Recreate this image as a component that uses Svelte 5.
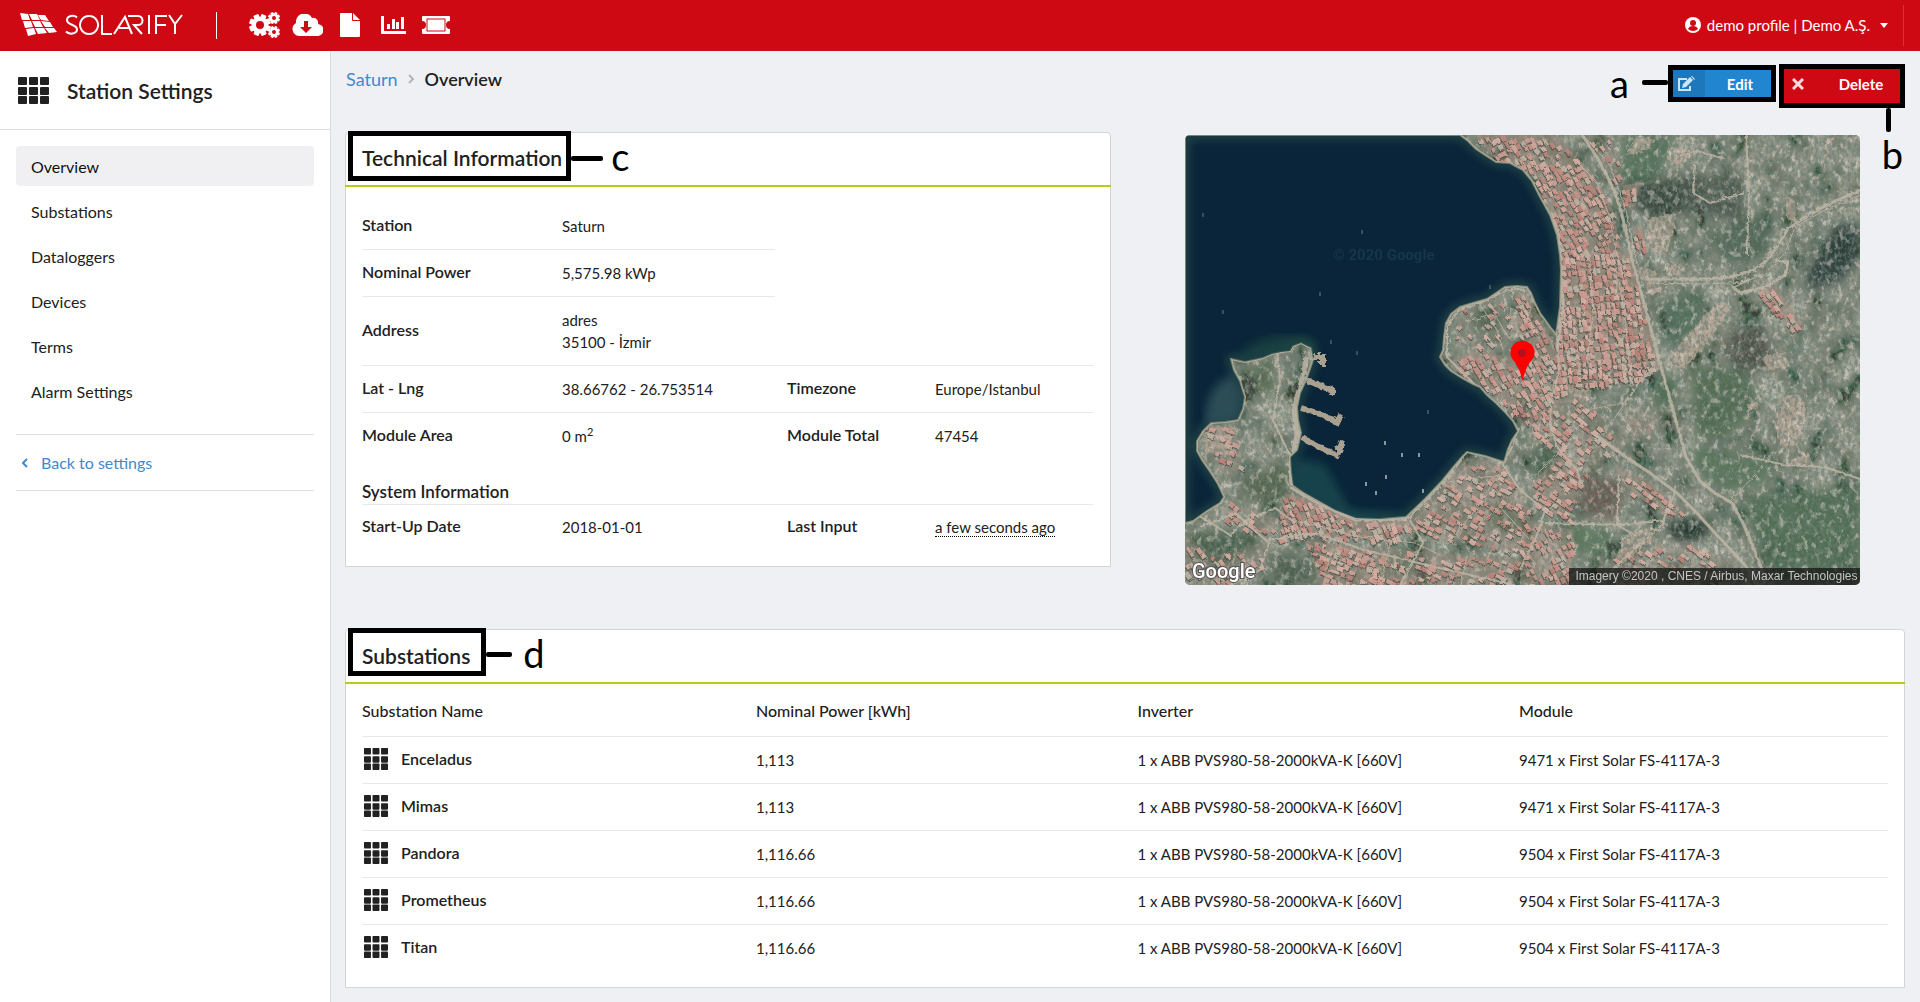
<script>
  const nav = ['Overview', 'Substations', 'Dataloggers', 'Devices', 'Terms', 'Alarm Settings'];

  const substations = [
    ['Enceladus', '1,113', '9471'],
    ['Mimas', '1,113', '9471'],
    ['Pandora', '1,116.66', '9504'],
    ['Prometheus', '1,116.66', '9504'],
    ['Titan', '1,116.66', '9504']
  ];

  // Small deterministic generator, so the town looks the same on every load.
  function generator(seed) {
    let s = seed;
    return () => {
      s = (s * 16807) % 2147483647;
      return s / 2147483647;
    };
  }

  function inside(x, y, poly) {
    let hit = false;
    for (let i = 0, j = poly.length - 1; i < poly.length; j = i++) {
      const [xi, yi] = poly[i];
      const [xj, yj] = poly[j];
      if (yi > y !== yj > y && x < ((xj - xi) * (y - yi)) / (yj - yi) + xi) hit = !hit;
    }
    return hit;
  }

  // Districts: outline, street angle in degrees, share of built-up plots.
  const districts = [
    { poly: [[290, 0], [372, 0], [408, 40], [428, 75], [438, 125], [372, 125], [366, 75], [345, 34], [311, 25]], angle: 62, fill: 0.8 },
    { poly: [[400, 0], [425, 0], [440, 35], [428, 45]], angle: 60, fill: 0.4 },
    { poly: [[378, 118], [446, 118], [474, 232], [450, 246], [371, 258], [374, 200]], angle: 84, fill: 0.92 },
    { poly: [[330, 158], [343, 160], [372, 215], [374, 285], [338, 292], [300, 250], [262, 228], [290, 215], [340, 225]], angle: 62, fill: 0.72 },
    { poly: [[272, 175], [320, 158], [330, 215], [270, 225]], angle: 45, fill: 0.2 },
    { poly: [[374, 260], [400, 262], [440, 312], [400, 340], [350, 300]], angle: 40, fill: 0.35 },
    { poly: [[282, 322], [320, 330], [345, 375], [340, 420], [215, 392], [260, 350]], angle: 30, fill: 0.55 },
    { poly: [[350, 345], [380, 315], [395, 345], [385, 385], [350, 370]], angle: 35, fill: 0.7 },
    { poly: [[100, 358], [130, 366], [172, 386], [225, 386], [210, 408], [160, 402], [95, 402]], angle: 68, fill: 0.85 },
    { poly: [[45, 366], [95, 385], [85, 400], [40, 385]], angle: 40, fill: 0.5 },
    { poly: [[120, 405], [180, 412], [200, 450], [135, 450]], angle: 20, fill: 0.75 },
    { poly: [[180, 412], [340, 425], [330, 450], [180, 450]], angle: 24, fill: 0.55 },
    { poly: [[340, 385], [390, 395], [385, 450], [335, 450]], angle: 65, fill: 0.65 },
    { poly: [[430, 330], [470, 350], [500, 375], [485, 385], [440, 352]], angle: 38, fill: 0.6 },
    { poly: [[425, 420], [500, 405], [545, 425], [550, 450], [430, 450]], angle: 38, fill: 0.3 },
    { poly: [[0, 400], [30, 420], [88, 405], [80, 430], [40, 450], [0, 450]], angle: 55, fill: 0.4 },
    { poly: [[575, 155], [590, 150], [618, 190], [608, 198]], angle: 55, fill: 0.9 },
    { poly: [[447, 95], [458, 92], [462, 116], [452, 120]], angle: 75, fill: 0.9 },
    { poly: [[438, 50], [455, 48], [450, 72], [438, 72]], angle: 80, fill: 0.9 },
    { poly: [[15, 290], [50, 292], [58, 330], [45, 345], [20, 320]], angle: 20, fill: 0.4 }
  ];

  const roofs = ['#dca297', '#d2978c', '#e0b0a4', '#c98a80', '#d8a79c', '#c9bbab', '#e3b9ae'];

  const houses = districts.flatMap((d, k) => {
    const next = generator(977 + k * 131);
    const xs = d.poly.map((p) => p[0]);
    const ys = d.poly.map((p) => p[1]);
    const cx = (Math.min(...xs) + Math.max(...xs)) / 2;
    const cy = (Math.min(...ys) + Math.max(...ys)) / 2;
    const rad = (d.angle * Math.PI) / 180;
    const out = [];
    for (let i = -20; i <= 20; i++) {
      for (let j = -24; j <= 24; j++) {
        const u = i * 7 + next() * 2;
        const v = j * 5 + (j % 3 === 0 ? 1 : 0) + next();
        const x = cx + u * Math.cos(rad) - v * Math.sin(rad);
        const y = cy + u * Math.sin(rad) + v * Math.cos(rad);
        const keep = next() < d.fill;
        const w = 4 + next() * 3;
        const h = 3 + next() * 2;
        const c = roofs[Math.floor(next() * roofs.length)];
        if (keep && inside(x, y, d.poly)) {
          out.push({ x: x.toFixed(1), y: y.toFixed(1), w: w.toFixed(1), h: h.toFixed(1), c, a: d.angle });
        }
      }
    }
    return out;
  });

  const sea =
    'M0 0H275L283 6 291 14 300 20 311 27 325 28 338 35 347 46 354 60 365 80 372 100 375 120 376 135 375 172 371 199 366 193 361 186 355 178 350 168 346 158 342 152 332 151 320 152 311 158 302 164 288 168 275 172 266 179 261 188 259 202 258 215 255 222 260 230 266 236 277 243 288 249 295 252 302 260 311 268 320 277 328 286 333 296 327 305 323 314 319 327 300 321 282 317 277 322 266 335 257 346 240 364 221 382 195 384 171 383 150 375 134 366 118 357 108 350 106 336 105 322 112 315 116 298 113 285 112 272 115 258 121 245 128 225 126 213 116 208 108 211 105 216 96 217 87 219 78 223 60 227 46 224 49 235 55 246 58 256 60 262 58 274 53 285 40 287 26 288 18 296 12 306 12 316 17 325 26 338 33 349 39 362 35 368 22 376 8 386 0 388Z';

  const roads = [
    ['M397 0 412 22 424 45 431 60 438 84 449 132 461 175 476 232 488 275 501 322 515 346 530 358 547 368 558 388 565 405 576 432 580 450', 3],
    ['M461 144 519 144 545 142 569 135 580 127 592 112 602 95 620 82 642 70 675 55', 3],
    ['M461 148 519 149 560 147 580 138 600 118 610 92 640 75 675 60', 1],
    ['M411 300 438 320 465 338 492 358 510 376 529 397 560 430 572 450', 3],
    ['M372 200 374 235 366 270 365 290 372 312 392 335 396 350', 2],
    ['M390 25 410 45 424 80 432 120 440 150', 1],
    ['M398 0 425 30 441 75 452 130', 1],
    ['M376 130 378 172 372 215', 3],
    ['M366 76 374 102 377 135', 2],
    ['M405 130 408 180 400 240M428 120 440 180 445 240', 1],
    ['M334 293 327 312 318 330 335 355 360 375 352 400 335 435', 2],
    ['M278 322 258 347 222 384 170 385 132 368 105 352', 3],
    ['M107 350 106 330 112 300 109 275 118 240 122 222', 5],
    ['M92 215 95 245 88 285 95 300 110 330', 2],
    ['M0 372 45 400 62 385 90 373 110 388', 2],
    ['M15 392 50 378 84 408 75 435 45 450', 2],
    ['M84 405 130 398 180 415 250 432 330 450', 2],
    ['M110 385 165 400 230 408 255 420', 1],
    ['M225 385 238 408 215 450', 2],
    ['M282 420 276 450M205 410 195 450M150 402 138 450', 1],
    ['M345 405 315 372 290 392M320 330 290 375 262 410', 1],
    ['M322 372 345 345 372 320 385 308', 1],
    ['M255 348 300 342 325 340', 1],
    ['M360 388 440 390 480 385', 2],
    ['M434 340 432 390 450 400M490 358 475 392 430 432 415 450', 2],
    ['M440 270 455 245 470 235', 2],
    ['M418 300 440 268 400 275', 1],
    ['M561 0 564 60 562 120M510 30 508 58 525 68 560 58', 2],
    ['M555 320 600 330 640 332 675 344', 2],
    ['M603 125 600 140 580 152 555 158 548 152 565 144', 3],
    ['M590 125 603 128 600 142', 2],
    ['M545 366 575 335 580 320', 1],
    ['M340 156 330 153 315 158 295 168 275 174 262 190 262 222 290 250 322 280', 2],
    ['M292 165 312 195 318 215M280 186 310 180 325 205', 1],
    ['M500 20 512 16 540 24', 2]
  ];

  // Bare ground: light, sandy clearings.
  const clearings = [
    'M465 84 492 78 488 100 478 122 462 110Z',
    'M485 12 508 14 500 28 490 30 482 24Z',
    'M482 128 500 132 496 140 480 140Z',
    'M520 180 540 165 545 175 520 212 500 232 482 230 490 215Z',
    'M598 262 615 258 622 275 612 310 596 312 590 290Z',
    'M565 262 575 270 560 282Z',
    'M575 222 600 216 605 232 585 235Z',
    'M600 60 610 66 612 88 602 84Z',
    'M440 20 452 0 470 4 458 18Z',
    'M606 322 624 318 628 332 606 330Z',
    'M440 400 466 390 470 408 455 412 440 430 430 425Z',
    'M380 252 404 250 408 268 388 262Z',
    'M325 175 345 172 342 200 325 205Z',
    'M640 5 650 0 640 30Z',
    'M450 130 470 135 478 155 465 160Z',
    'M345 290 372 285 368 305 350 310Z',
    'M20 292 50 290 45 320 20 318Z'
  ];

  const fields = [
    ['M438 0H490L480 30 470 45H432Z', '#53715a'],
    ['M450 48 510 42 500 78 462 84 448 72Z', '#37453c'],
    ['M500 40 560 40 560 90 500 72Z', '#4c584e'],
    ['M565 80 590 80 580 120 540 130 520 100Z', '#4f6553'],
    ['M620 140 650 90 675 85 675 120 655 150 620 155Z', '#2f3d3a'],
    ['M470 245 495 240 490 270 470 272Z', '#486a50'],
    ['M505 230 560 235 575 270 540 305 510 300Z', '#50694f'],
    ['M505 310 590 325 580 350 540 358 515 340Z', '#56735a'],
    ['M560 360 675 352V450H590L565 390Z', '#4e6b52'],
    ['M485 385 520 385 522 402 500 408 482 402Z', '#24352f'],
    ['M352 310 378 318 362 345 345 340Z', '#46604a'],
    ['M380 390 430 395 415 420 375 412Z', '#5a7859'],
    ['M0 398 55 395 80 408 40 432 10 430Z', '#48604a'],
    ['M85 415 125 425 135 450 88 450Z', '#4e5e4d'],
    ['M300 372 345 380 330 400 300 392Z', '#4e6c50'],
    ['M210 415 235 420 225 442 198 436Z', '#4a6a50'],
    ['M395 340 440 345 432 385 395 380Z', '#695a4f'],
    ['M440 282 470 280 470 300 442 302Z', '#9a8c7e'],
    ['M285 180 312 172 315 195 290 198Z', '#425c48'],
    ['M60 232 90 222 90 262 70 250Z', '#5c7055'],
    ['M55 340 105 330 105 365 60 368Z', '#55654e'],
    ['M480 165 520 155 515 195 480 215Z', '#4c6b54'],
    ['M540 200 580 190 590 235 550 235Z', '#4d4f47'],
    ['M400 85 428 90 435 115 410 118Z', '#52685a']
  ];

  const boats = [[176, 95], [134, 157], [171, 216], [242, 275], [199, 306], [216, 318], [233, 318], [180, 347], [190, 356], [200, 340], [237, 354], [37, 175], [17, 78], [145, 205], [304, 150]];
</script>

{#snippet grid()}
  <svg class="grid-icon" viewBox="0 0 31 27" preserveAspectRatio="none" aria-hidden="true">
    {#each [0, 11, 22] as x}
      {#each [0, 10, 19] as y}
        <rect {x} {y} width="9" height="8" rx="1" />
      {/each}
    {/each}
  </svg>
{/snippet}

{#snippet cog(x, y, r, n, hole)}
  <g transform="translate({x} {y})">
    {#each Array(n) as _, i}
      <rect x={-r * 0.25} y={-r} width={r * 0.5} height={r} rx={r * 0.1} transform="rotate({(i * 360) / n + 22})" />
    {/each}
    <circle r={r * 0.76} />
    <circle r={hole} class="hole" />
  </g>
{/snippet}

<div class="app">
  <header class="topbar">
    <a class="brand" href="#home" aria-label="Solarify">
      <svg class="panel-logo" viewBox="0 0 38 26" aria-hidden="true">
        <path d="M0 1 8 2 10 8 2 8ZM9 2 17 2 20 8 12 8ZM18 3 25 3 29 9 21 8ZM3 9 11 9 13 15 5 16ZM12 9 20 9 23 15 15 15ZM21 9 30 10 33 15 25 15ZM6 17 14 16 16 22 8 24ZM15 16 24 16 27 21 18 22ZM25 16 34 16 37 20 29 21Z" />
      </svg>
      <svg class="wordmark" viewBox="0 0 118 22" aria-hidden="true">
        <path d="M12 3.500C9 .500 2 1.500 2 6c0 5.500 10 4 10 9.500C12 20 4 21 1 17.500M24 2a9 9 0 1 0 .1 0M37 1V20H47M49 20 60 3 67 20M54 14H64M63 2H73C79 2 79 11 73 11H69L77 20M84 1V20M91 20V2H102M91 11H101M104 1 110 10 117 1M110 10V20" />
      </svg>
    </a>
    <nav class="tools" aria-label="Sections">
      <a href="#settings" aria-label="Settings">
        <svg width="31" height="26" viewBox="0 0 31 26">
          {@render cog(11, 13, 11, 8, 4)}
          {@render cog(25, 6, 6, 8, 2)}
          {@render cog(25, 20, 6, 8, 2)}
        </svg>
      </a>
      <a href="#download" aria-label="Downloads">
        <svg width="31" height="22" viewBox="0 0 31 22">
          <path d="M7 22a7 7 0 0 1-3-13A8.500 8.500 0 0 1 20 4a5 5 0 0 1 6 6 6 6 0 0 1-1 12Z" />
          <path class="hole" d="M12 7h4v6h4l-6 6-6-6h4Z" />
        </svg>
      </a>
      <a href="#reports" aria-label="Reports">
        <svg width="20" height="24" viewBox="0 0 20 24">
          <path d="M0 1Q0 0 1 0H12V7Q12 8 13 8H20V23Q20 24 19 24H1Q0 24 0 23ZM13 0 20 7H13Z" />
        </svg>
      </a>
      <a href="#charts" aria-label="Charts">
        <svg width="25" height="18" viewBox="0 0 25 18">
          <path d="M0 0H3V15H25V18H1Q0 18 0 17ZM6 8H9V13H6ZM11 3H14V13H11ZM15 6H18V13H15ZM20 1H23V13H20Z" />
        </svg>
      </a>
      <a href="#tickets" aria-label="Tickets">
        <svg width="28" height="18" viewBox="0 0 28 18">
          <path d="M1 0H27Q28 0 28 1V5A4 4 0 0 0 28 13V17Q28 18 27 18H1Q0 18 0 17V13A4 4 0 0 0 0 5V1Q0 0 1 0Z" />
          <rect class="frame" x="5" y="3" width="18" height="12" />
        </svg>
      </a>
    </nav>
    <button class="profile" type="button">
      <svg width="16" height="16" viewBox="0 0 16 16" aria-hidden="true">
        <circle cx="8" cy="8" r="8" />
        <circle class="hole" cx="8" cy="6" r="3" />
        <path class="hole" d="M3 12Q4 9 8 9T13 12Q11 14 8 14T3 12Z" />
      </svg>
      <span>demo profile | Demo A.Ş.</span>
      <svg class="caret" width="8" height="5" viewBox="0 0 8 5" aria-hidden="true"><path d="M0 0H8L4 5Z" /></svg>
    </button>
  </header>

  <div class="body">
    <aside class="sidebar">
      <h1>{@render grid()}Station Settings</h1>
      <nav aria-label="Station settings">
        {#each nav as item, i}
          <a href="#section" class:active={i === 0}>{item}</a>
        {/each}
      </nav>
      <a class="back" href="#back">
        <svg width="7" height="10" viewBox="0 0 7 10" aria-hidden="true"><path d="M6 1 2 5 6 9" /></svg>
        Back to settings
      </a>
    </aside>

    <main>
      <div class="heading">
        <div class="crumbs">
          <a href="#saturn">Saturn</a>
          <svg width="7" height="10" viewBox="0 0 7 10" aria-hidden="true"><path d="M1 1 5 5 1 9" /></svg>
          <strong>Overview</strong>
        </div>
        <div class="actions">
          <div class="callout mark-a">
            <button class="btn edit" type="button">
              <span class="ico">
                <svg width="18" height="16" viewBox="0 0 18 16" aria-hidden="true">
                  <path class="line" d="M10 3H2V14H13V10" />
                  <path d="M6 8 13 1 16 4 9 11 5 12ZM14 0 15 0 18 3 17 4Z" />
                </svg>
              </span>
              <span class="label">Edit</span>
            </button>
            <span class="note">a</span>
          </div>
          <div class="callout mark-b">
            <button class="btn delete" type="button">
              <span class="ico">
                <svg width="12" height="12" viewBox="0 0 12 12" aria-hidden="true">
                  <path class="cross" d="M1 1 11 11M11 1 1 11" />
                </svg>
              </span>
              <span class="label">Delete</span>
            </button>
            <span class="note">b</span>
          </div>
        </div>
      </div>

      <div class="columns">
        <section class="panel">
          <div class="panel-head">
            <div class="callout mark-c">
              <h2>Technical Information</h2>
              <span class="note">c</span>
            </div>
          </div>
          <div class="tech">
            <table>
              <colgroup><col class="c1" /><col class="c2" /><col class="c3" /><col /></colgroup>
              <tbody>
                <tr><th scope="row">Station</th><td>Saturn</td></tr>
                <tr><th scope="row">Nominal Power</th><td>5,575.98 kWp</td></tr>
                <tr><th scope="row">Address</th><td>adres<br />35100 - İzmir</td></tr>
                <tr><th scope="row">Lat - Lng</th><td>38.66762 - 26.753514</td><th scope="row" class="second">Timezone</th><td>Europe/Istanbul</td></tr>
                <tr><th scope="row">Module Area</th><td>0 m<sup>2</sup></td><th scope="row" class="second">Module Total</th><td>47454</td></tr>
              </tbody>
            </table>
            <h3>System Information</h3>
            <table class="system">
              <colgroup><col class="c1" /><col class="c2" /><col class="c3" /><col /></colgroup>
              <tbody>
                <tr><th scope="row">Start-Up Date</th><td>2018-01-01</td><th scope="row" class="second">Last Input</th><td><span class="ago">a few seconds ago</span></td></tr>
              </tbody>
            </table>
          </div>
        </section>

        <div class="map">
          <svg viewBox="0 0 675 450" role="img" aria-label="Satellite map of the station">
            <defs>
              <filter id="ground" x="0" y="0" width="100%" height="100%">
                <feTurbulence type="fractalNoise" baseFrequency="0.04 0.03" numOctaves="6" seed="8" />
                <feColorMatrix values="2 .6 0 0 -.85  1.600 .6 0 0 -.66  1.500 .6 0 0 -.67  0 0 0 0 1" />
              </filter>
              <filter id="speckle" x="0" y="0" width="100%" height="100%">
                <feTurbulence type="fractalNoise" baseFrequency="0.17 0.13" numOctaves="5" seed="21" />
                <feColorMatrix values="0 0 0 0 .8  0 0 0 0 .71  0 0 0 0 .64  5 0 0 0 -2.600" />
              </filter>
              <filter id="shade" x="0" y="0" width="100%" height="100%">
                <feTurbulence type="fractalNoise" baseFrequency="0.3 0.22" numOctaves="3" seed="5" />
                <feColorMatrix values="0 0 0 0 .14  0 0 0 0 .2  0 0 0 0 .17  0 5 0 0 -2.200" />
              </filter>
              <filter id="soft" x="-10%" y="-10%" width="120%" height="120%"><feGaussianBlur stdDeviation="5" /></filter>
              <filter id="edge" x="-10%" y="-10%" width="120%" height="120%">
                <feTurbulence type="fractalNoise" baseFrequency="0.2" numOctaves="2" seed="2" />
                <feDisplacementMap in="SourceGraphic" scale="7" />
              </filter>
              <filter id="town" x="0" y="0" width="100%" height="100%">
                <feTurbulence type="fractalNoise" baseFrequency="0.25" numOctaves="2" seed="9" />
                <feDisplacementMap in="SourceGraphic" scale="4" />
                <feGaussianBlur stdDeviation="0.5" />
              </filter>
              <clipPath id="water"><path d={sea} /></clipPath>
            </defs>
            <rect width="675" height="450" fill="#64705f" />
            <rect width="675" height="450" filter="url(#ground)" opacity=".4" />
            <g filter="url(#soft)">
              {#each fields as [d, c]}<path {d} fill={c} opacity=".9" />{/each}
            </g>
            <g filter="url(#edge)">
              {#each clearings as d}<path {d} fill="#bdab9b" opacity=".75" />{/each}
            </g>
            <rect width="675" height="450" filter="url(#speckle)" opacity=".5" />
            <rect width="675" height="450" filter="url(#shade)" opacity=".6" />
            {#each districts as d}
              <polygon points={d.poly.join(' ')} fill="#a08a7d" opacity={d.fill * 0.6} />
            {/each}
            <g filter="url(#town)">
              <rect width="675" height="450" fill="none" />
              {#each houses as h}
                <g transform="translate({h.x} {h.y}) rotate({h.a})">
                  <rect x="1" y="1" width={h.w} height={h.h} fill="#3a443f" opacity=".7" />
                  <rect width={h.w} height={h.h} fill={h.c} opacity=".85" />
                </g>
              {/each}
              <g fill="none" stroke="#bdb5a6" stroke-linejoin="round">
                {#each roads as [d, w]}<path {d} stroke-width={w} opacity=".85" />{/each}
              </g>
            </g>
            <path d={sea} fill="#0a2539" stroke="#b4ab98" stroke-width="2" />
            <g clip-path="url(#water)">
              <path d={sea} fill="none" stroke="#31564f" stroke-width="8" opacity=".7" filter="url(#soft)" />
              <path d="M20 288Q20 250 48 240L58 262 52 285Z" fill="#3a5f64" opacity=".7" filter="url(#soft)" />
              <path d="M108 322 140 330 165 375 220 380 171 390 105 352Z" fill="#15424b" filter="url(#soft)" />
              <path d="M48 225Q80 190 130 205L128 222Z" fill="#1f4442" opacity=".8" filter="url(#soft)" />
            </g>
            <g fill="none" stroke="#a9a08f" stroke-width="6" filter="url(#edge)">
              <path d="M128 222 138 222V232M121 245 132 250 147 255V260M116 273 138 280 152 288 156 280M118 303 134 312 152 320 158 306" />
            </g>
            {#each boats as [x, y], i}
              <rect {x} {y} width="2" height="4" fill="#a8b5b3" opacity={i > 3 && i < 11 ? 0.8 : 0.3} />
            {/each}
            <text class="watermark" x="148" y="125">© 2020 Google</text>
            <path d="M337 245Q336 237 330 227A12 12 0 1 1 345 227Q339 237 338 245Z" fill="#fe0000" />
            <circle cx="337" cy="218" r="4" fill="#b3111c" />
            <text class="google" x="7" y="443">Google</text>
          </svg>
          <small>Imagery ©2020 , CNES / Airbus, Maxar Technologies</small>
        </div>
      </div>

      <section class="panel">
        <div class="panel-head">
          <div class="callout mark-d">
            <h2>Substations</h2>
            <span class="note">d</span>
          </div>
        </div>
        <div class="list">
          <table>
            <colgroup><col class="s1" /><col class="s2" /><col class="s2" /><col /></colgroup>
            <thead>
              <tr><th>Substation Name</th><th>Nominal Power [kWh]</th><th>Inverter</th><th>Module</th></tr>
            </thead>
            <tbody>
              {#each substations as [name, power, count]}
                <tr>
                  <th scope="row"><span class="name">{@render grid()}{name}</span></th>
                  <td>{power}</td>
                  <td>1 x ABB PVS980-58-2000kVA-K [660V]</td>
                  <td>{count} x First Solar FS-4117A-3</td>
                </tr>
              {/each}
            </tbody>
          </table>
        </div>
      </section>
    </main>
  </div>
</div>

<style>
  :global(body) { background: #eff0f4; }
  .app, .app :global(*) { box-sizing: border-box; }
  .app {
    min-height: 100vh;
    display: flex;
    flex-direction: column;
    font: 15px/22px Lato, 'Liberation Sans', sans-serif;
    color: #212121;
  }
  a { color: #4289ca; text-decoration: none; }
  button { font: inherit; border: 0; margin: 0; cursor: pointer; }
  h1, h2, h3 { margin: 0; font-weight: 600; }

  .topbar {
    height: 51px;
    display: flex;
    align-items: center;
    background: #cf0914;
    padding: 0 16px 1px 20px;
  }
  .topbar svg { fill: #fff; display: block; }
  .topbar .hole { fill: #cf0914; }
  .topbar .frame { fill: none; stroke: #cf0914; stroke-width: 1; }
  .brand {
    display: flex;
    align-items: center;
    gap: 7px;
    padding-right: 33px;
    border-right: 1px solid #fff;
    height: 27px;
  }
  .panel-logo { width: 38px; height: 26px; }
  .topbar .wordmark { width: 118px; height: 22px; fill: none; stroke: #fff; stroke-width: 2; }
  .tools { display: flex; align-items: center; padding-left: 32px; gap: 12px; }
  .tools a:nth-child(3) { padding: 0 9px 0 5px; }
  .tools a:nth-child(4) { padding-right: 4px; }
  .profile {
    margin-left: auto;
    height: 41px;
    display: flex;
    align-items: center;
    gap: 6px;
    color: #fff;
    background: none;
    padding: 0 15px 0 0;
    border-right: 1px solid #d8333c;
  }
  .caret { margin-left: 4px; }

  .body { flex: 1; display: flex; }
  .sidebar { width: 331px; flex: none; background: #fff; border-right: 1px solid #dcdcdf; }
  .sidebar h1 {
    height: 79px;
    display: flex;
    align-items: center;
    gap: 18px;
    padding: 1px 18px 0;
    font-size: 21px;
    border-bottom: 1px solid #dededf;
  }
  .grid-icon { width: 31px; height: 27px; fill: #212121; flex: none; }
  .sidebar nav { display: flex; flex-direction: column; gap: 5px; padding: 16px 16px 23px; }
  .sidebar nav a { color: #212121; font-size: 16px; line-height: 38px; padding: 2px 15px 0; border-radius: 4px; }
  .sidebar nav a.active { background: #f0f0f3; color: #111; }
  .back {
    display: flex;
    align-items: center;
    gap: 13px;
    height: 57px;
    margin: 0 16px;
    padding: 0 5px;
    font-size: 16px;
    border: solid #dededf;
    border-width: 1px 0;
  }
  .back svg { fill: none; stroke: #4289ca; stroke-width: 2; }

  main { flex: 1; min-width: 0; padding: 0 15px 14px 14px; }
  .heading { display: flex; justify-content: space-between; height: 81px; padding-top: 13px; }
  .crumbs { display: flex; align-items: center; gap: 10px; height: 30px; padding-left: 1px; font-size: 18px; }
  .crumbs strong { font-weight: 600; }
  .crumbs svg { fill: none; stroke: #b3b5b0; stroke-width: 2; }
  .actions { display: flex; align-items: flex-start; gap: 3px; }

  /* Black frames with a leader line and a letter, laid over the page. */
  .callout { position: relative; border: 5px solid #000; }
  .callout::after { content: ''; position: absolute; background: #000; border-radius: 2px; }
  .note { position: absolute; color: #000; font-size: 38px; line-height: 38px; font-weight: 400; }
  .mark-a { margin-top: 1px; }
  .mark-a::after { width: 26px; height: 5px; right: calc(100% + 5px); top: 10px; }
  .mark-a .note { right: calc(100% + 44px); top: -6px; }
  .mark-b::after { width: 5px; height: 24px; top: calc(100% + 5px); right: 9px; }
  .mark-b .note { right: -3px; top: calc(100% + 32px); }
  .mark-c::after { width: 32px; height: 5px; left: calc(100% + 5px); top: 20px; }
  .mark-c .note { left: calc(100% + 45px); top: 1px; }
  .mark-d::after { width: 26px; height: 5px; left: calc(100% + 5px); top: 19px; }
  .mark-d .note { left: calc(100% + 42px); top: 1px; }

  .btn { display: flex; align-items: stretch; padding: 0; color: #fff; font-weight: 700; font-size: 15px; line-height: 20px; }
  .btn svg { fill: #cde4f5; }
  .btn .ico { display: flex; align-items: center; justify-content: center; width: 32px; }
  .btn .label { flex: 1; display: flex; align-items: center; justify-content: center; }
  .edit { width: 98px; height: 27px; background: #2185d0; }
  .edit .ico { background: #1e77bb; padding-right: 6px; }
  .edit .label { padding-left: 4px; }
  .edit .line { fill: none; stroke: #cde4f5; stroke-width: 2; }
  .delete { width: 116px; height: 34px; background: #cf0914; padding-bottom: 4px; }
  .delete .ico { width: 28px; }
  .delete .label { padding-left: 10px; }
  .cross { stroke: #fbdcdd; stroke-width: 3; }

  .columns { display: grid; grid-template-columns: 1fr 1fr; gap: 28px; align-items: start; margin-bottom: 44px; }
  .panel { background: #fff; border: 1px solid #d4d4d5; border-radius: 4px 4px 0 0; }
  .panel-head { height: 54px; display: flex; align-items: flex-start; border-bottom: 2px solid #b5cc18; margin: 0 -1px; padding-left: 3px; }
  .mark-c, .mark-d { margin-top: -2px; }
  .panel h2 { font-size: 21px; line-height: 24px; padding: 10px 4px 6px 9px; }
  .panel .mark-d h2 { padding: 11px 11px 3px 9px; }

  table { width: 100%; border-collapse: collapse; table-layout: fixed; }
  th, td { text-align: left; font-weight: 400; padding: 12px 0; border-top: 1px solid #e8e8e9; }
  th { font-weight: 600; font-size: 16px; }
  .tech { padding: 15px 17px 15px 16px; }
  .tech th { padding: 11px 0 13px; }
  .tech tr:first-child > * { border-top-color: transparent; }
  .tech .system tr > * { border-top-color: #e8e8e9; padding: 11px 0 13px; }
  .tech .system tr > th { padding: 10px 0 14px; }
  .tech tr > .second, .tech .system tr > .second { padding-left: 12px; }
  .c1 { width: 200px; }
  .c2 { width: 213px; }
  .c3 { width: 160px; }
  sup { font-size: 11px; line-height: 0; }
  h3 { font-size: 17px; line-height: 24px; margin-top: 21px; }
  .ago { border-bottom: 1px dotted #000; }

  .map { position: relative; justify-self: center; width: 100%; max-width: 675px; margin-top: 3px; border-radius: 5px; overflow: hidden; }
  .map svg { display: block; width: 100%; }
  .map small { position: absolute; right: 0; bottom: 0; padding: 0 2px 0 6px; background: rgba(20, 22, 20, 0.75); color: #c4c4c2; font: 12px/17px 'Liberation Sans', Arial, sans-serif; }
  .watermark { font: bold 15px Roboto, sans-serif; fill: #17364a; }
  .google { font: 500 20px Roboto, sans-serif; fill: #fff; stroke: #555; stroke-width: 2; paint-order: stroke; }

  .list { padding: 3px 16px 16px; }
  .list thead th { border-top: 0; padding: 13px 0 14px; font-weight: 500; }
  .list .grid-icon { width: 24px; height: 22px; }
  .list tbody th { padding: 11px 0 13px; }
  .name { display: flex; align-items: center; gap: 13px; padding-left: 2px; height: 22px; }
  .s1 { width: 394px; }
  .s2 { width: 25%; }
</style>
